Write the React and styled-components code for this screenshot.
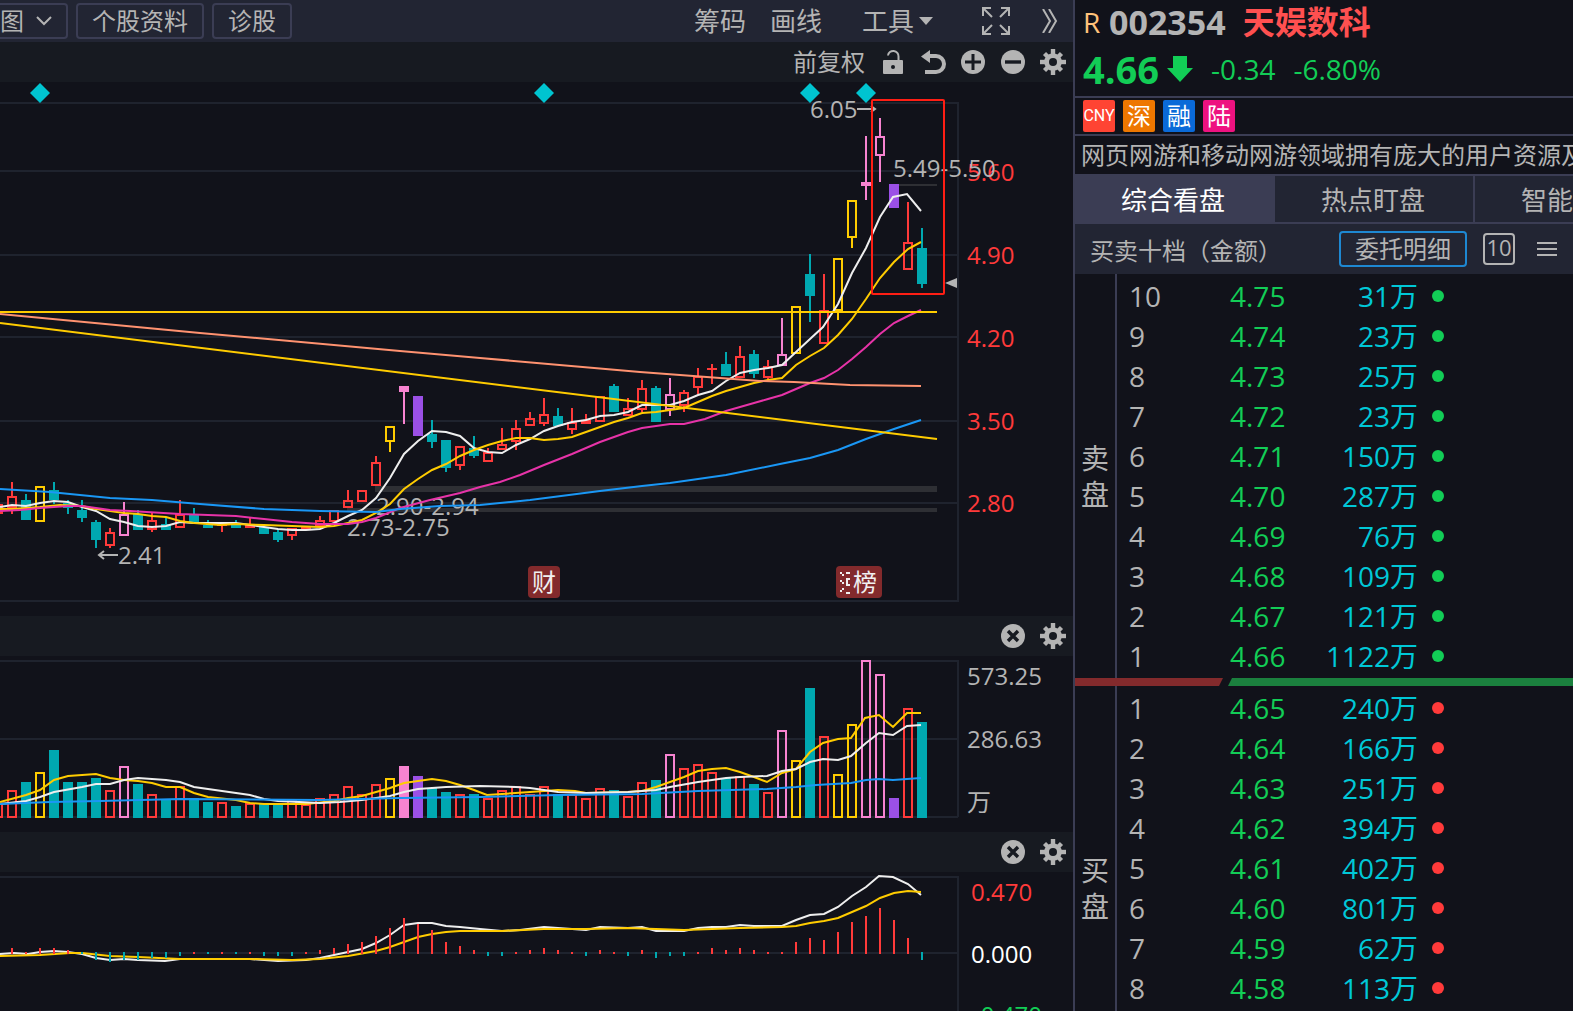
import styled, { createGlobalStyle } from "styled-components";

const COLORS = {
  R: "#ff3a3a",
  T: "#00a8b0",
  Y: "#ffcc00",
  P: "#f783d0",
  V: "#9b50e6",
};

// [kind, high, top, bottom, low, volume top, macd], one entry per trading day
const DAYS = [
  ["R", 504, 504, 514, 514, 803, 0],
  ["R", 482, 496, 508, 514, 790, 6],
  ["T", 494, 500, 520, 520, 782, 2],
  ["Y", 486, 486, 522, 522, 772, 6],
  ["T", 482, 490, 500, 504, 750, 6],
  ["T", 500, 503, 508, 514, 782, 4],
  ["T", 500, 510, 518, 522, 782, -2],
  ["T", 520, 522, 540, 548, 778, -8],
  ["R", 528, 532, 546, 548, 790, -10],
  ["P", 502, 514, 536, 536, 766, -8],
  ["T", 510, 514, 530, 530, 784, -8],
  ["R", 512, 520, 530, 532, 794, -6],
  ["T", 518, 524, 530, 530, 800, -6],
  ["R", 500, 514, 528, 528, 786, -4],
  ["T", 508, 515, 522, 522, 798, 2],
  ["T", 520, 525, 528, 528, 802, -2],
  ["R", 524, 524, 526, 532, 802, 2],
  ["T", 520, 525, 528, 528, 806, -2],
  ["R", 518, 524, 528, 528, 803, 2],
  ["T", 527, 527, 534, 534, 804, -4],
  ["T", 529, 532, 540, 542, 805, -4],
  ["R", 528, 528, 536, 540, 800, -4],
  ["R", 526, 526, 530, 530, 804, 2],
  ["R", 516, 520, 526, 526, 798, 4],
  ["R", 510, 510, 522, 522, 794, 6],
  ["R", 490, 500, 508, 508, 786, 10],
  ["R", 490, 490, 502, 502, 794, 12],
  ["R", 456, 462, 486, 486, 784, 18],
  ["Y", 426, 426, 442, 452, 778, 26],
  ["P", 386, 386, 392, 424, 766, 36, true],
  ["V", 396, 396, 436, 436, 776, 30],
  ["T", 420, 434, 442, 448, 788, 24],
  ["T", 440, 440, 468, 472, 792, 12],
  ["R", 446, 446, 466, 470, 794, 8],
  ["T", 436, 448, 456, 458, 794, 4],
  ["R", 448, 452, 462, 462, 798, -4],
  ["R", 428, 444, 450, 450, 790, -4],
  ["R", 420, 428, 442, 450, 786, 2],
  ["R", 412, 418, 426, 426, 794, 4],
  ["R", 398, 414, 424, 426, 786, 6],
  ["T", 408, 416, 426, 426, 794, 4],
  ["R", 408, 422, 430, 434, 794, 2],
  ["R", 414, 420, 424, 424, 798, -4],
  ["R", 396, 396, 422, 422, 788, 4],
  ["T", 384, 386, 412, 412, 790, 2],
  ["R", 398, 408, 416, 416, 796, -4],
  ["R", 380, 388, 410, 412, 782, 4],
  ["T", 386, 388, 422, 422, 780, -6],
  ["P", 378, 394, 410, 416, 754, -4],
  ["R", 390, 392, 406, 412, 768, -4],
  ["R", 368, 376, 388, 394, 764, 2],
  ["R", 364, 368, 370, 384, 772, 6],
  ["T", 352, 364, 376, 376, 778, 4],
  ["R", 346, 356, 378, 378, 776, 6],
  ["T", 350, 354, 374, 378, 784, 4],
  ["R", 360, 366, 378, 380, 792, 2],
  ["P", 318, 354, 366, 366, 730, 2],
  ["Y", 306, 306, 354, 354, 760, 12],
  ["T", 254, 274, 296, 322, 688, 16],
  ["R", 274, 310, 344, 344, 736, 14],
  ["Y", 258, 258, 311, 320, 774, 22],
  ["Y", 200, 200, 238, 248, 724, 32],
  ["P", 136, 182, 186, 200, 660, 38],
  ["P", 118, 136, 156, 182, 674, 46],
  ["V", 184, 184, 208, 208, 798, 34],
  ["R", 202, 242, 270, 270, 708, 16],
  ["T", 228, 248, 284, 288, 722, -8],
];

const MAIN_LINES = [
  {
    color: "#eeeeee",
    points:
      "0,507 12,505 26,506 40,503 54,501 68,502 82,507 96,511 110,519 124,522 138,526 152,527 166,526 180,522 194,523 236,523 264,527 278,529 292,530 306,530 320,529 334,523 348,516 362,510 376,498 390,478 404,454 418,441 432,431 446,432 460,436 474,448 488,452 502,453 516,445 530,439 544,431 558,426 572,422 586,420 600,416 614,415 628,412 642,405 670,405 684,401 698,395 712,391 726,381 740,373 754,370 768,368 782,365 796,352 810,339 823,327 838,304 852,273 866,248 880,217 893,197 907,194 921,211",
  },
  {
    color: "#ffcc00",
    points:
      "0,509 12,509 40,507 60,505 82,506 96,509 110,511 124,513 138,514 152,516 166,517 180,521 194,523 220,525 236,524 264,525 292,526 320,527 334,526 348,523 362,520 376,513 390,504 404,489 418,479 432,470 446,464 460,456 474,450 488,445 502,441 516,438 530,438 544,440 558,439 572,437 586,432 600,427 614,422 628,418 642,413 656,412 670,410 684,408 698,402 712,396 726,391 740,387 754,383 768,380 782,378 796,365 810,356 824,348 838,335 852,319 866,299 880,278 894,262 908,249 921,242",
  },
  {
    color: "#e733a8",
    points:
      "0,511 20,510 40,508 68,506 82,506 96,508 110,510 130,511 180,514 236,516 264,519 292,522 320,524 348,524 362,522 376,518 400,508 430,500 460,493 480,487 500,482 520,475 544,465 572,454 600,442 628,432 642,428 670,424 684,424 705,419 726,411 740,407 754,403 768,399 782,395 796,389 810,383 824,378 838,370 852,359 866,347 880,334 894,323 908,316 921,310",
  },
  {
    color: "#1a97f5",
    points:
      "0,489 50,492 110,498 152,500 200,504 264,509 320,511 376,512 400,509 440,506 480,505 530,500 600,491 642,486 670,483 726,475 780,464 810,458 838,450 866,439 894,429 921,420",
  },
  {
    color: "#ff9270",
    points:
      "0,314 200,333 400,351 480,358 640,372 760,381 794,382 850,385 921,386",
  },
  { color: "#ffcc00", points: "0,323 937,439" },
  { color: "#ffcc00", points: "0,312 937,312" },
];

const VOLUME_LINES = [
  {
    color: "#ffcc00",
    points:
      "0,802 26,795 40,790 54,780 68,776 96,774 110,778 124,780 138,781 152,783 166,787 180,787 194,793 208,797 236,800 250,803 264,804 306,804 334,801 348,798 362,796 376,792 390,788 404,783 418,781 432,779 446,781 460,785 474,790 487,795 502,794 530,792 558,790 575,791 586,793 628,792 642,791 656,787 670,782 684,777 698,771 712,769 726,768 740,772 754,777 767,782 782,773 796,769 810,752 823,743 838,739 851,738 865,718 879,715 893,727 907,713 921,713",
  },
  {
    color: "#eeeeee",
    points:
      "0,804 26,801 40,797 54,792 82,787 96,784 110,784 124,780 138,778 152,779 166,780 180,782 194,787 208,789 222,791 250,795 264,799 278,801 320,803 340,802 362,800 376,798 390,796 404,792 418,789 446,787 480,786 516,787 530,788 558,792 586,793 628,792 656,790 670,787 698,782 726,778 740,777 767,776 782,771 796,769 810,762 823,759 838,760 851,756 866,743 879,733 893,735 907,726 921,725",
  },
  {
    color: "#1a97f5",
    points:
      "0,804 50,802 100,801 180,799 320,800 400,798 480,797 560,795 642,794 698,791 767,789 796,787 816,785 851,783 866,780 879,779 893,780 921,778",
  },
];

const MACD_LINES = [
  {
    color: "#eeeeee",
    points:
      "0,954 14,953 28,954 40,952 54,951 68,952 82,954 96,958 110,960 124,959 138,960 165,961 180,959 250,959 278,961 306,960 320,958 334,955 348,952 362,949 376,943 390,935 404,925 418,923 432,923 446,926 460,927 480,929 502,931 520,930 544,927 586,930 600,927 628,928 642,927 656,931 684,931 698,928 712,927 726,927 740,925 754,926 782,926 796,920 810,915 824,914 838,907 852,896 866,887 879,876 893,877 908,884 921,895",
  },
  {
    color: "#ffcc00",
    points:
      "0,956 40,955 70,953 82,953 110,956 138,957 180,959 250,959 292,960 320,959 348,956 376,951 390,947 404,942 418,937 432,934 446,932 460,931 502,931 544,929 586,929 628,928 684,930 740,928 782,927 796,926 810,923 824,921 838,918 852,912 866,906 880,898 894,893 908,891 921,892",
  },
];

const SELL = [
  ["10", "4.75", "31万"],
  ["9", "4.74", "23万"],
  ["8", "4.73", "25万"],
  ["7", "4.72", "23万"],
  ["6", "4.71", "150万"],
  ["5", "4.70", "287万"],
  ["4", "4.69", "76万"],
  ["3", "4.68", "109万"],
  ["2", "4.67", "121万"],
  ["1", "4.66", "1122万"],
];

const BUY = [
  ["1", "4.65", "240万"],
  ["2", "4.64", "166万"],
  ["3", "4.63", "251万"],
  ["4", "4.62", "394万"],
  ["5", "4.61", "402万"],
  ["6", "4.60", "801万"],
  ["7", "4.59", "62万"],
  ["8", "4.58", "113万"],
];

const dayX = (i) => 14 * i - 2;

const Bar = ({ x, top, bottom, color, solid }) =>
  solid ? (
    <rect x={x - 5} y={top} width={10} height={bottom - top} fill={color} />
  ) : (
    <rect
      x={x - 4}
      y={top + 1}
      width={8}
      height={bottom - top - 2}
      fill="none"
      stroke={color}
      strokeWidth={2}
    />
  );

const isSolid = (kind, top, bottom, forced) =>
  kind === "T" || kind === "V" || forced || bottom - top <= 4;

const Lines = ({ lines }) =>
  lines.map((line, i) => (
    <polyline
      key={i}
      points={line.points}
      fill="none"
      stroke={line.color}
      strokeWidth={2}
    />
  ));

const MainChart = () => (
  <StChart viewBox="0 82 1073 534" $height={534}>
    <g fill="#1f232e">
      {[102, 170, 254, 336, 420, 502, 600].map((y) => (
        <rect key={y} x={0} y={y} width={958} height={2} />
      ))}
      <rect x={957} y={102} width={2} height={500} />
    </g>
    <g fill="#2e2f34">
      <rect x={375} y={486} width={562} height={6} />
      <rect x={347} y={508} width={590} height={4} />
      <rect x={899} y={184} width={38} height={2} />
    </g>
    <g fill="#00c4d0">
      {[40, 544, 810, 866].map((x) => (
        <path key={x} d={`M${x} 83l10 10-10 10-10-10z`} />
      ))}
    </g>
    <g shapeRendering="crispEdges">
      {DAYS.map(([kind, high, top, bottom, low, , , forced], i) => (
        <g key={i}>
          <rect
            x={dayX(i) - 1}
            y={high}
            width={2}
            height={top - high}
            fill={COLORS[kind]}
          />
          <rect
            x={dayX(i) - 1}
            y={bottom}
            width={2}
            height={low - bottom}
            fill={COLORS[kind]}
          />
          <Bar
            x={dayX(i)}
            top={top}
            bottom={bottom}
            color={COLORS[kind]}
            solid={isSolid(kind, top, bottom, forced)}
          />
        </g>
      ))}
    </g>
    <g fill="#ff3a3a">
      <text x={967} y={181}>5.60</text>
      <text x={967} y={264}>4.90</text>
      <text x={967} y={347}>4.20</text>
      <text x={967} y={430}>3.50</text>
      <text x={967} y={512}>2.80</text>
    </g>
    <g fill="#b4b4b4">
      <text x={810} y={118}>6.05</text>
      <text x={893} y={177}>5.49-5.50</text>
      <text x={376} y={515}>2.90-2.94</text>
      <text x={347} y={536}>2.73-2.75</text>
      <text x={118} y={564}>2.41</text>
    </g>
    <g fill="none" stroke="#b4b4b4" strokeWidth={2}>
      <path d="M857 109h18m-4-3 4 3-4 3" />
      <path d="M118 555H99m5-4-5 4 5 4" />
    </g>
    <Lines lines={MAIN_LINES} />
    <rect
      x={872}
      y={100}
      width={72}
      height={194}
      rx={1}
      fill="none"
      stroke="#ff1e14"
      strokeWidth={2}
    />
    <path d="M945 283l12-5v10z" fill="#b4b4b4" />
    <rect x={528} y={566} width={32} height={32} rx={4} fill="#832a2c" />
    <text x={532} y={591} fill="#f0f0f0">财</text>
    <rect x={836} y={566} width={46} height={32} rx={4} fill="#832a2c" />
    <text x={853} y={591} fill="#f0f0f0">榜</text>
    <path
      d="M840 573h2M842 575h2M840 581h2M842 583h2M842 589h2M840 591h2M846 573h4M850 579h-3v6h3M846 593h4"
      fill="none"
      stroke="#f0f0f0"
      strokeWidth={2}
    />
  </StChart>
);

const VolumeChart = () => (
  <StChart viewBox="0 656 1073 176" $height={176}>
    <g fill="#1f232e">
      {[660, 738, 816].map((y) => (
        <rect key={y} x={0} y={y} width={958} height={2} />
      ))}
      <rect x={957} y={660} width={2} height={157} />
    </g>
    <g shapeRendering="crispEdges">
      {DAYS.map(([kind, , , , , volume, , forced], i) => (
        <Bar
          key={i}
          x={dayX(i)}
          top={volume}
          bottom={818}
          color={COLORS[kind]}
          solid={isSolid(kind, volume, 818, forced)}
        />
      ))}
    </g>
    <Lines lines={VOLUME_LINES} />
    <g fill="#b4b4b4">
      <text x={967} y={685}>573.25</text>
      <text x={967} y={748}>286.63</text>
      <text x={967} y={811}>万</text>
    </g>
  </StChart>
);

const MacdChart = () => (
  <StChart viewBox="0 872 1073 139" $height={139}>
    <g fill="#1f232e">
      {[876, 952].map((y) => (
        <rect key={y} x={0} y={y} width={958} height={2} />
      ))}
      <rect x={957} y={876} width={2} height={135} />
    </g>
    <Lines lines={MACD_LINES} />
    {DAYS.map(([, , , , , , macd], i) => (
      <rect
        key={i}
        x={dayX(i) - 1}
        y={macd > 0 ? 954 - macd : 952}
        width={2}
        height={Math.abs(macd)}
        fill={macd > 0 ? COLORS.R : COLORS.T}
      />
    ))}
    <text x={971} y={901} fill="#ff3a3a">0.470</text>
    <text x={971} y={963} fill="#ffffff">0.000</text>
    <text x={973} y={1024} fill="#12cd56">-0.470</text>
  </StChart>
);

const GearIcon = () => (
  <StIcon viewBox="-12 -12 24 24">
    <g fill="currentColor">
      {[0, 45, 90, 135].map((angle) => (
        <rect
          key={angle}
          x={-2.2}
          y={angle % 90 ? -12 : -13}
          width={4.4}
          height={angle % 90 ? 24 : 26}
          transform={`rotate(${angle})`}
        />
      ))}
      <circle r={8.8} />
    </g>
    <circle r={4} fill="#171a21" />
  </StIcon>
);

const CloseIcon = () => (
  <StIcon viewBox="-12 -12 24 24">
    <circle r={12} fill="currentColor" />
    <path d="M-5-5l10 10M5-5l-10 10" stroke="#171a21" strokeWidth={3.4} />
  </StIcon>
);

const PlusIcon = () => (
  <StIcon viewBox="-12 -12 24 24">
    <circle r={12} fill="currentColor" />
    <path d="M-8 0H8M0-8V8" stroke="#171a21" strokeWidth={3} />
  </StIcon>
);

const MinusIcon = () => (
  <StIcon viewBox="-12 -12 24 24">
    <circle r={12} fill="currentColor" />
    <path d="M-8 0H8" stroke="#171a21" strokeWidth={3.4} />
  </StIcon>
);

const LockIcon = () => (
  <StIcon viewBox="0 0 24 24">
    <rect x={2} y={10} width={20} height={14} rx={1} fill="currentColor" />
    <path
      d="M7 5.5a5.2 5 0 0 1 10.5 1V11"
      fill="none"
      stroke="currentColor"
      strokeWidth={2}
    />
    <circle cx={12} cy={17} r={2} fill="#171a21" />
  </StIcon>
);

const UndoIcon = () => (
  <StIcon viewBox="0 0 24 24">
    <path d="M0 6.5L9 0v13z" fill="currentColor" />
    <path
      d="M7 6h8a7.8 7.8 0 0 1 0 16H4"
      fill="none"
      stroke="currentColor"
      strokeWidth={4}
    />
  </StIcon>
);

const SubHeader = ({ children }) => (
  <StSubHeader>
    {children}
    <StIconButton aria-label="设置">
      <GearIcon />
    </StIconButton>
  </StSubHeader>
);

const OrderTable = ({ rows, side }) => (
  <StTable>
    <tbody>
      {rows.map(([level, price, amount]) => (
        <tr key={level}>
          <StLevel>{level}</StLevel>
          <StPriceCell>{price}</StPriceCell>
          <StAmount>{amount}</StAmount>
          <StDotCell>
            <StDot $side={side} />
          </StDotCell>
        </tr>
      ))}
    </tbody>
  </StTable>
);

const App = () => {
  return (
    <>
      <GlobalStyle />
      <StPage>
        <StCharts>
          <StToolbar>
            <StCutButton>
              图
              <svg width="16" height="10" viewBox="0 0 16 10">
                <path
                  d="M1 1l7 7 7-7"
                  fill="none"
                  stroke="currentColor"
                  strokeWidth="2"
                />
              </svg>
            </StCutButton>
            <StToolButton>个股资料</StToolButton>
            <StToolButton>诊股</StToolButton>
            <StTools>
              <StTextButton>筹码</StTextButton>
              <StTextButton>画线</StTextButton>
              <StTextButton $left={16}>
                工具
                <svg width="14" height="8" viewBox="0 0 14 8">
                  <path d="M0 0h14L7 8z" fill="currentColor" />
                </svg>
              </StTextButton>
              <StTextButton $left={25} aria-label="全屏">
                <svg width="28" height="28" viewBox="0 0 28 28">
                  <path
                    d="M1 9V1h8M19 1h8v8M27 19v8h-8M9 27H1v-8M2 2l8 8M26 2l-8 8M26 26l-8-8M2 26l8-8"
                    fill="none"
                    stroke="currentColor"
                    strokeWidth="2"
                  />
                </svg>
              </StTextButton>
              <StTextButton $left={8} aria-label="更多">
                <svg width="16" height="24" viewBox="0 0 16 24">
                  <path
                    d="M1 0l7 12-7 12M7 0l7 12-7 12"
                    fill="none"
                    stroke="currentColor"
                    strokeWidth="2"
                  />
                </svg>
              </StTextButton>
            </StTools>
          </StToolbar>
          <SubHeader>
            <span>前复权</span>
            <StIconButton aria-label="锁定">
              <LockIcon />
            </StIconButton>
            <StIconButton aria-label="撤销">
              <UndoIcon />
            </StIconButton>
            <StIconButton aria-label="放大">
              <PlusIcon />
            </StIconButton>
            <StIconButton aria-label="缩小">
              <MinusIcon />
            </StIconButton>
          </SubHeader>
          <StChartRow>
            <MainChart />
          </StChartRow>
          <SubHeader>
            <StIconButton aria-label="关闭">
              <CloseIcon />
            </StIconButton>
          </SubHeader>
          <StChartRow>
            <VolumeChart />
          </StChartRow>
          <SubHeader>
            <StIconButton aria-label="关闭">
              <CloseIcon />
            </StIconButton>
          </SubHeader>
          <StChartRow>
            <MacdChart />
          </StChartRow>
        </StCharts>

        <StSide>
          <StQuote>
            <StNameRow>
              <StMargin>R</StMargin>
              <StCode>002354</StCode>
              <StName>天娱数科</StName>
            </StNameRow>
            <StPriceRow>
              <StPrice>4.66</StPrice>
              <svg width="26" height="26" viewBox="0 0 26 26">
                <path d="M6 0h14v12h6L13 26 0 12h6z" fill="currentColor" />
              </svg>
              <StChange>-0.34</StChange>
              <StChange>-6.80%</StChange>
            </StPriceRow>
          </StQuote>
          <StBadges>
            <StCurrency>CNY</StCurrency>
            <StBadge $color="#ee7700">深</StBadge>
            <StBadge $color="#0a6ad8">融</StBadge>
            <StBadge $color="#ee1280">陆</StBadge>
          </StBadges>
          <StNews>网页网游和移动网游领域拥有庞大的用户资源及</StNews>
          <StTabs>
            <StTab $active>综合看盘</StTab>
            <StTab>热点盯盘</StTab>
            <StTab>智能</StTab>
          </StTabs>
          <StBookHeader>
            <StBookTitle>买卖十档（金额）</StBookTitle>
            <StDetailButton>委托明细</StDetailButton>
            <StTenButton>10</StTenButton>
            <StIconButton aria-label="菜单">
              <svg width="20" height="14" viewBox="0 0 20 14">
                <path
                  d="M0 1h20M0 7h20M0 13h20"
                  stroke="currentColor"
                  strokeWidth="2"
                />
              </svg>
            </StIconButton>
          </StBookHeader>
          <StBook>
            <StBookLabel>
              <span>卖</span>
              <span>盘</span>
            </StBookLabel>
            <OrderTable rows={SELL} side="sell" />
          </StBook>
          <StRatio>
            <StRatioBuy />
            <StRatioSell />
          </StRatio>
          <StBook>
            <StBookLabel>
              <span>买</span>
              <span>盘</span>
            </StBookLabel>
            <OrderTable rows={BUY} side="buy" />
          </StBook>
        </StSide>
      </StPage>
    </>
  );
};

export default App;

const GlobalStyle = createGlobalStyle`
  * {
    box-sizing: border-box;
  }
  body {
    margin: 0;
    background-color: #11121a;
    color: #b4b4b4;
    font-family: "Open Sans", "Noto Sans CJK SC", sans-serif;
    font-size: 24px;
  }
  button {
    padding: 0;
    border: none;
    background: none;
    color: inherit;
    font: inherit;
    cursor: pointer;
  }
`;

const StPage = styled.div`
  display: flex;
  height: 100vh;
  overflow: hidden;
`;

const StCharts = styled.main`
  flex: 1;
  min-width: 0;
  display: flex;
  flex-direction: column;
`;

const StToolbar = styled.div`
  flex: 0 0 42px;
  display: flex;
  align-items: center;
  gap: 8px;
  background-color: #222533;
`;

const StToolButton = styled.button`
  height: 36px;
  padding: 0 14px;
  border: 2px solid #3b3d54;
  border-radius: 4px;
  line-height: 32px;
  white-space: nowrap;
`;

const StCutButton = styled(StToolButton)`
  display: flex;
  align-items: center;
  gap: 12px;
  padding-left: 0;
  border-left: none;
  border-radius: 0 4px 4px 0;
`;

const StTools = styled.div`
  margin-left: auto;
  padding-right: 15px;
  display: flex;
  align-items: center;
  gap: 24px;
`;

const StTextButton = styled.button`
  display: flex;
  align-items: center;
  gap: 5px;
  margin-left: ${(props) => props.$left || 0}px;
  font-size: 26px;
  line-height: 42px;
  white-space: nowrap;
`;

const StSubHeader = styled.div`
  flex: 0 0 40px;
  display: flex;
  justify-content: flex-end;
  align-items: center;
  gap: 16px;
  padding-right: 8px;
  background-color: #171a21;
  line-height: 40px;
`;

const StIconButton = styled.button`
  display: flex;
`;

const StIcon = styled.svg`
  width: 24px;
  height: 24px;
  overflow: visible;
`;

const StChartRow = styled.div`
  display: flex;
  justify-content: flex-end;
  overflow: hidden;
`;

const StChart = styled.svg`
  flex: 0 0 auto;
  width: 1073px;
  height: ${(props) => props.$height}px;
`;

const StSide = styled.aside`
  flex: 0 0 500px;
  display: flex;
  flex-direction: column;
  border-left: 2px solid #3b3d54;
  overflow: hidden;
`;

const StQuote = styled.div`
  flex: 0 0 98px;
  padding-left: 8px;
  border-bottom: 2px solid #3b3d54;
`;

const StNameRow = styled.div`
  display: flex;
  align-items: center;
  height: 44px;
  line-height: 44px;
`;

const StMargin = styled.span`
  width: 26px;
  color: #ffc27a;
  font-size: 28px;
`;

const StCode = styled.span`
  font-size: 34px;
  font-weight: 700;
`;

const StName = styled.span`
  margin-left: 17px;
  color: #ff5050;
  font-size: 32px;
  font-weight: 700;
`;

const StPriceRow = styled.div`
  display: flex;
  align-items: center;
  height: 50px;
  color: #12cd56;
  line-height: 50px;
`;

const StPrice = styled.span`
  margin-right: 8px;
  font-size: 38px;
  font-weight: 700;
`;

const StChange = styled.span`
  margin-left: 18px;
  font-size: 28px;
`;

const StBadges = styled.div`
  flex: 0 0 38px;
  display: flex;
  align-items: center;
  gap: 8px;
  padding-left: 8px;
  border-bottom: 2px solid #3b3d54;
`;

const StBadge = styled.span`
  width: 32px;
  height: 32px;
  border-radius: 2px;
  background-color: ${(props) => props.$color};
  color: white;
  line-height: 32px;
  text-align: center;
`;

const StCurrency = styled(StBadge)`
  background-color: #ff4433;
  font-family: "Liberation Sans Narrow", "Roboto", sans-serif;
  font-size: 16px;
`;

const StNews = styled.div`
  flex: 0 0 38px;
  padding-left: 6px;
  line-height: 38px;
  white-space: nowrap;
  overflow: hidden;
`;

const StTabs = styled.div`
  flex: 0 0 50px;
  display: flex;
  border-top: 2px solid #3b3d54;
  border-bottom: 2px solid #3b3d54;
`;

const StTab = styled.button`
  flex: 0 0 200px;
  padding: 2px 0 0 46px;
  border-right: 2px solid #3b3d54;
  background-color: ${(props) => (props.$active ? "#3b3d54" : "#222533")};
  color: ${(props) => (props.$active ? "white" : "inherit")};
  font-size: 26px;
  line-height: 44px;
  text-align: left;
`;

const StBookHeader = styled.div`
  flex: 0 0 50px;
  display: flex;
  align-items: center;
  padding: 0 16px 0 15px;
  background-color: #222533;
`;

const StBookTitle = styled.span`
  flex: 1;
  white-space: nowrap;
`;

const StDetailButton = styled.button`
  width: 128px;
  height: 36px;
  border: 2px solid #1e88d2;
  border-radius: 4px;
  line-height: 32px;
`;

const StTenButton = styled.button`
  width: 32px;
  height: 32px;
  margin: 0 22px 0 16px;
  padding-bottom: 4px;
  border: 2px solid #b4b4b4;
  border-radius: 4px;
  font-size: 22px;
  line-height: 24px;
`;

const StBook = styled.section`
  flex: 0 0 auto;
  display: flex;
  min-height: 404px;
`;

const StBookLabel = styled.div`
  flex: 0 0 42px;
  display: flex;
  flex-direction: column;
  justify-content: center;
  align-items: center;
  border-right: 2px solid #3b3d54;
  font-size: 28px;
  line-height: 36px;
`;

const StTable = styled.table`
  align-self: flex-start;
  margin-top: 2px;
  border-collapse: collapse;
  font-size: 28px;
  line-height: 40px;

  td {
    height: 40px;
    padding: 0;
  }
`;

const StLevel = styled.td`
  width: 113px;

  && {
    padding-left: 12px;
  }
`;

const StPriceCell = styled.td`
  width: 80px;
  color: #12cd56;
`;

const StAmount = styled.td`
  width: 108px;
  color: #00c8d7;
  text-align: right;
`;

const StDotCell = styled.td`
  && {
    padding-left: 14px;
  }
`;

const StDot = styled.span`
  display: block;
  width: 12px;
  height: 12px;
  border-radius: 50%;
  background-color: ${(props) => (props.$side === "sell" ? "#12cd56" : "#ff3a3a")};
`;

const StRatio = styled.div`
  flex: 0 0 8px;
  display: flex;
  gap: 5px;
`;

const StRatioBuy = styled.div`
  width: 148px;
  background-color: #832a2c;
  clip-path: polygon(0 0, 100% 0, calc(100% - 4px) 100%, 0 100%);
`;

const StRatioSell = styled.div`
  flex: 1;
  background-color: #1b803e;
  clip-path: polygon(4px 0, 100% 0, 100% 100%, 0 100%);
`;
